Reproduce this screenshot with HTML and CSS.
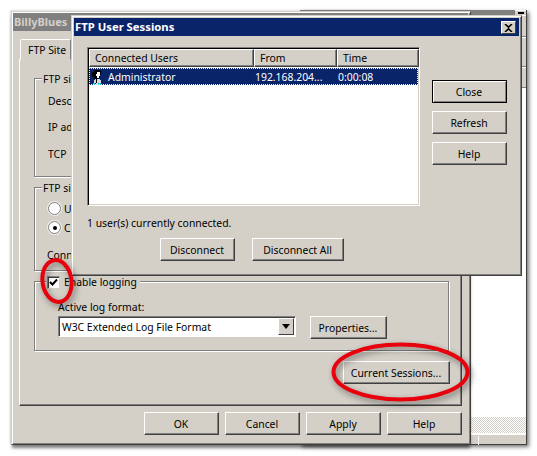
FILE: index.html
```html
<!DOCTYPE html>
<html lang="en">
<head>
    <meta charset="UTF-8">
    <meta name="viewport" content="width=device-width, initial-scale=1.0">
    <title>FTP User Sessions</title>
    <link rel="stylesheet" href="styles.css">
</head>
<body>
    <div class="desktop">
        <!-- Console window behind the dialogs -->
        <div class="console">
            <div class="console-title"><span class="min-btn"></span></div>
            <div class="console-bar tall"></div>
            <div class="console-bar wide"></div>
            <div class="console-bar"></div>
            <div class="console-body"></div>
            <div class="console-dither"></div>
            <div class="console-tabs"><span class="console-tab"></span></div>
        </div>

        <!-- Properties dialog, only the part the top dialog leaves visible has text -->
        <div class="props">
            <div class="titlebar inactive">BillyBlues</div>
            <div class="tab">FTP Site</div>
            <div class="panel">
                <div class="group group-ident">
                    <div class="group-title">FTP si</div>
                    <div class="field">Desc</div>
                    <div class="field">IP ad</div>
                    <div class="field">TCP</div>
                </div>
                <div class="group group-conn">
                    <div class="group-title">FTP si</div>
                    <div class="radio-row"><span class="radio"></span>U</div>
                    <div class="radio-row"><span class="radio on"></span>C</div>
                    <div class="conn-label">Conn</div>
                </div>
                <div class="group group-log">
                    <div class="group-title check-title">
                        <span class="check">
                            <svg width="11" height="11" viewBox="0 0 11 11"><path d="M2 5l2.5 2.5L9 2.5" fill="none" stroke="#000" stroke-width="2"/></svg>
                        </span>
                        Enable logging
                    </div>
                    <div class="log-label">Active log format:</div>
                    <div class="log-row">
                        <div class="combo">
                            <span class="combo-text">W3C Extended Log File Format</span>
                            <span class="combo-arrow"></span>
                        </div>
                        <button class="btn btn-props">Properties...</button>
                    </div>
                </div>
                <div class="sessions-row">
                    <button class="btn btn-current">Current Sessions...</button>
                </div>
            </div>
            <div class="props-buttons">
                <button class="btn">OK</button>
                <button class="btn">Cancel</button>
                <button class="btn">Apply</button>
                <button class="btn">Help</button>
            </div>
        </div>

        <!-- FTP User Sessions dialog -->
        <div class="sessions">
            <div class="titlebar">
                FTP User Sessions
                <span class="close-x">
                    <svg width="9" height="8" viewBox="0 0 9 8"><path d="M1 0l3.5 3.2L8 0M1 8l3.5-3.2L8 8" fill="none" stroke="#000" stroke-width="1.6"/></svg>
                </span>
            </div>
            <div class="sessions-body">
                <div class="sessions-main">
                    <div class="list">
                        <div class="list-head">
                            <div class="head-cell">Connected Users</div>
                            <div class="head-cell">From</div>
                            <div class="head-cell">Time</div>
                        </div>
                        <div class="list-row">
                            <div class="user-cell">
                                <svg class="user-icon" width="12" height="15" viewBox="0 0 12 15" shape-rendering="crispEdges">
                                    <path d="M3 0h6v1h1v4H9v3H7v1H3V7H1V2h2z" fill="#000"/>
                                    <path d="M6 2h3v4H8v2H6V6H5V4h1z" fill="#fff"/>
                                    <path d="M4 9h5v1h1v3H8v2H5v-2H3v-3h1z" fill="#d8d8d8"/>
                                    <path d="M5 9h1v4H5z" fill="#000"/>
                                    <path d="M2 13h2v2H2zM7 13h3v2H7z" fill="#19c8c8"/>
                                </svg>
                                Administrator
                            </div>
                            <div class="row-cell">192.168.204...</div>
                            <div class="row-cell">0:00:08</div>
                        </div>
                    </div>
                    <div class="status">1 user(s) currently connected.</div>
                    <div class="disconnect-row">
                        <button class="btn">Disconnect</button>
                        <button class="btn btn-all">Disconnect All</button>
                    </div>
                </div>
                <div class="sessions-side">
                    <button class="btn btn-default">Close</button>
                    <button class="btn">Refresh</button>
                    <button class="btn">Help</button>
                </div>
            </div>
        </div>

        <!-- Red marks drawn on top of the screenshot -->
        <svg class="marks" width="537" height="456" viewBox="0 0 537 456">
            <ellipse cx="57" cy="281" rx="14.5" ry="21" transform="rotate(-8 57 281)"/>
            <ellipse cx="400.5" cy="372" rx="67" ry="27.5"/>
        </svg>
    </div>
</body>
</html>
```

FILE: styles.css
```css
/* Page */
* {
    box-sizing: border-box;
}

body {
    margin: 0;
    background: #fff;
    font-family: "Noto Sans", sans-serif;
    font-size: 10.4px;
    line-height: 14px;
    color: #000;
    overflow: hidden;
}

.desktop {
    position: relative;
    width: 537px;
    height: 456px;
    overflow: hidden;
}

/* Console window */
.console {
    position: absolute;
    left: 300px;
    top: 10px;
    width: 227px;
    height: 435px;
    display: flex;
    flex-direction: column;
    background: #fff;
    border-right: 1px solid #404040;
    border-bottom: 1px solid #404040;
    box-shadow: 2px 2px 4px rgba(0, 0, 0, 0.55);
}

.console-title {
    height: 5px;
    background: #808080;
    display: flex;
    justify-content: flex-end;
}

.min-btn {
    width: 11px;
    background: #d4d0c8;
    border-top: 1px solid #fff;
    position: relative;
}

.min-btn::after {
    content: "";
    position: absolute;
    left: 3px;
    top: 1px;
    width: 6px;
    height: 2px;
    background: #000;
}

.console-bar {
    height: 21px;
    background: #d4d0c8;
    border-top: 1px solid #fff;
    border-bottom: 1px solid #808080;
}

.console-bar.tall {
    height: 22px;
}

.console-bar.wide {
    height: 30px;
}

.console-body {
    flex: 1;
    background: #fff;
}

.console-dither {
    height: 16px;
    background: repeating-conic-gradient(#d4d0c8 0 25%, #fff 0 50%) 0 0 / 2px 2px;
}

.console-tabs {
    height: 11px;
    background: #d4d0c8;
    border-top: 2px solid #fff;
    padding-left: 178px;
}

.console-tab {
    display: block;
    height: 100%;
    width: 48px;
    border-left: 1px solid #fff;
    margin-top: 1px;
}

/* Dialog frames */
.props {
    position: absolute;
    left: 11px;
    top: 11px;
    width: 460px;
    height: 434px;
    background: #d4d0c8;
    border: 1px solid;
    border-color: #d4d0c8 #404040 #404040 #d4d0c8;
    box-shadow: inset 1px 1px 0 #fff, inset -1px -1px 0 #808080, 0 4px 3px -1px rgba(0, 0, 0, 0.5), -1px -1px 2px rgba(0, 0, 0, 0.12);
    padding: 1px 2px 2px 1px;
}

.sessions {
    position: absolute;
    left: 71px;
    top: 15px;
    width: 451px;
    height: 261px;
    background: #d4d0c8;
    border: 1px solid;
    border-color: #d4d0c8 #404040 #404040 #d4d0c8;
    box-shadow: inset 1px 1px 0 #fff, inset -1px -1px 0 #808080;
    padding: 2px;
}

.titlebar {
    height: 18px;
    padding-left: 1px;
    background: #0a246a;
    color: #fff;
    font-size: 11.3px;
    font-weight: 700;
    line-height: 18px;
    white-space: nowrap;
    overflow: hidden;
    position: relative;
}

.titlebar.inactive {
    background: #808080;
    color: #d4d0c8;
    font-size: 11px;
}

.close-x {
    position: absolute;
    right: 3px;
    top: 3px;
    width: 15px;
    height: 13px;
    display: flex;
    align-items: center;
    justify-content: center;
    background: #d4d0c8;
    border: 1px solid;
    border-color: #fff #404040 #404040 #fff;
}

/* Buttons */
.btn {
    width: 75px;
    height: 23px;
    padding: 0 1px 0 0;
    font: inherit;
    color: #000;
    background: #d4d0c8;
    border: 1px solid;
    border-color: #fff #404040 #404040 #fff;
    box-shadow: inset -1px -1px 0 #808080;
    white-space: nowrap;
}

.btn-default {
    border-color: #000;
    box-shadow: inset 1px 1px 0 #fff, inset -1px -1px 0 #808080;
}

.btn-props {
    width: 77px;
}

.btn-current {
    width: 107px;
    margin-right: -1px;
}

.btn-all {
    width: 92px;
}

/* Properties tab */
.tab {
    width: 51px;
    height: 21px;
    margin: 8px 0 -1px 7px;
    padding: 3px 0 0 7px;
    background: #d4d0c8;
    border: 1px solid;
    border-color: #fff #808080 transparent #fff;
    border-radius: 2px 2px 0 0;
    position: relative;
    z-index: 1;
}

.panel {
    width: 443px;
    height: 347px;
    margin-left: 6px;
    padding: 18px 12px 0 14px;
    border: 1px solid;
    border-color: #fff #404040 #404040 #fff;
    box-shadow: inset -1px -1px 0 #808080;
}

.group {
    border: 1px solid #808080;
    box-shadow: inset 1px 1px 0 #fff, 1px 1px 0 #fff;
    padding-left: 13px;
}

.group-title {
    width: fit-content;
    margin: -7px 0 0 -6px;
    padding: 0 1px;
    background: #d4d0c8;
    white-space: nowrap;
}

.group-ident {
    height: 99px;
}

.group-conn {
    height: 84px;
    margin-top: 10px;
}

.group-log {
    height: 70px;
    margin-top: 10px;
    padding-left: 23px;
}

.field {
    margin-top: 7px;
    height: 19px;
}

.group-ident .group-title + .field,
.group-ident .field:last-child {
    margin-top: 8px;
}

.radio-row {
    display: flex;
    align-items: center;
    gap: 3px;
    height: 13px;
    margin-top: 6px;
    white-space: nowrap;
}

.group-title + .radio-row {
    margin-top: 7px;
}

.radio {
    width: 13px;
    height: 13px;
    border-radius: 50%;
    background: #fff;
    border: 1px solid #808080;
    box-shadow: 0 0 0 1px #f0eeea;
    display: flex;
    align-items: center;
    justify-content: center;
}

.radio.on::after {
    content: "";
    width: 4px;
    height: 4px;
    border-radius: 50%;
    background: #000;
}

.conn-label {
    margin: 14px 0 0 -1px;
    white-space: nowrap;
}

/* Logging group */
.check-title {
    display: flex;
    align-items: center;
    gap: 4px;
    margin-left: -12px;
    padding-right: 3px;
}

.check {
    width: 13px;
    height: 13px;
    background: #fff;
    border: 1px solid;
    border-color: #808080 #d4d0c8 #d4d0c8 #808080;
    box-shadow: inset 1px 1px 0 #404040;
    display: flex;
    align-items: center;
    justify-content: center;
}

.log-label {
    margin-top: 11px;
}

.log-row {
    display: flex;
    align-items: flex-start;
    gap: 14px;
    margin-top: 2px;
}

.combo {
    width: 238px;
    height: 21px;
    display: flex;
    justify-content: space-between;
    align-items: center;
    padding: 0 1px 0 3px;
    background: #fff;
    border: 1px solid;
    border-color: #808080 #fff #fff #808080;
    box-shadow: inset 1px 1px 0 #404040;
}

.combo-arrow {
    width: 16px;
    height: 17px;
    background: #d4d0c8;
    border: 1px solid;
    border-color: #fff #404040 #404040 #fff;
    position: relative;
}

.combo-arrow::after {
    content: "";
    position: absolute;
    left: 3px;
    top: 5px;
    border: 4px solid transparent;
    border-top: 5px solid #000;
    border-bottom: 0;
}

.sessions-row {
    display: flex;
    justify-content: flex-end;
    margin-top: 10px;
}

.props-buttons {
    display: flex;
    justify-content: flex-end;
    gap: 6px;
    margin-top: 6px;
    padding-right: 6px;
}

/* User sessions body */
.sessions-body {
    display: flex;
    gap: 12px;
    padding: 11px 0 0 13px;
}

.sessions-main {
    width: 333px;
}

.sessions-side {
    display: flex;
    flex-direction: column;
    gap: 8px;
    padding-top: 33px;
}

.list {
    height: 159px;
    padding: 1px;
    background: #fff;
    border: 1px solid;
    border-color: #808080 #fff #fff #808080;
    box-shadow: inset 1px 1px 0 #000, inset -1px -1px 0 #d4d0c8;
}

.list-head,
.list-row {
    display: grid;
    grid-template-columns: 165px 83px 82px;
}

.head-cell {
    height: 18px;
    padding-left: 5px;
    line-height: 16px;
    background: #d4d0c8;
    border: 1px solid;
    border-color: #fff #404040 #404040 #fff;
    box-shadow: inset -1px -1px 0 #808080;
}

.list-row {
    height: 17px;
    margin-top: 1px;
    padding-top: 1px;
    background: #0a246a;
    color: #fff;
    line-height: 16px;
    outline: 1px dotted #fff8c0;
    outline-offset: -1px;
}

.user-cell {
    display: flex;
    align-items: center;
    gap: 5px;
    padding-left: 2px;
}

.row-cell {
    padding-left: 1px;
    white-space: nowrap;
}

.status {
    margin-top: 10px;
    white-space: nowrap;
}

.disconnect-row {
    display: flex;
    gap: 17px;
    margin: 8px 0 0 73px;
}

/* Red annotation ellipses */
.marks {
    position: absolute;
    left: 0;
    top: 0;
    fill: none;
    stroke: #e8000c;
    stroke-width: 4;
    filter: drop-shadow(2px 3px 3px rgba(0, 0, 0, 0.45));
}
```
